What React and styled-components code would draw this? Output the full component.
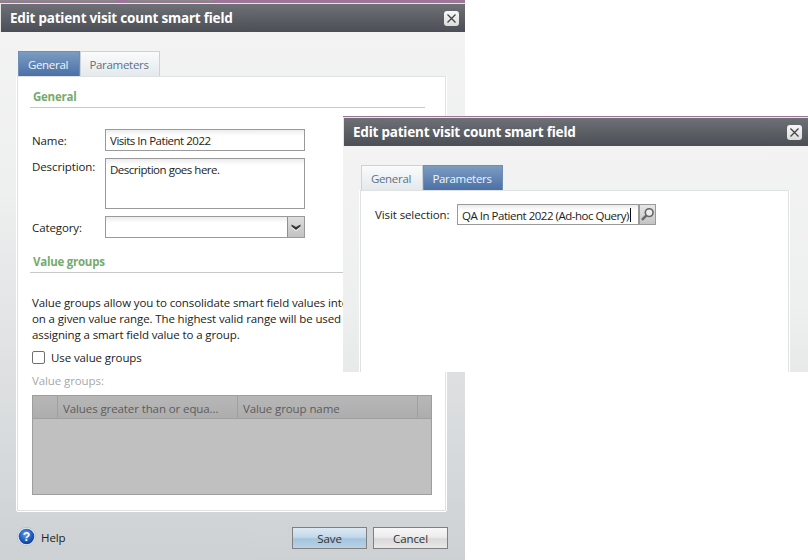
import React from "react";
import styled, { createGlobalStyle } from "styled-components";

const GlobalStyle = createGlobalStyle`
  html, body {
    margin: 0;
    padding: 0;
    background: #fff;
  }
  body {
    font-family: "Open Sans", "Noto Sans", sans-serif;
    font-size: 11.5px;
    letter-spacing: -0.1px;
    color: #222;
  }
`;

const Canvas = styled.div`
  position: relative;
  width: 808px;
  height: 560px;
  overflow: hidden;
  background: #fff;
`;

const Window = styled.div`
  position: absolute;
  left: ${(p) => p.$left}px;
  top: ${(p) => p.$top}px;
  width: 465px;
  height: ${(p) => p.$height}px;
  overflow: hidden;
  display: flex;
  flex-direction: column;
`;

const Stripe = styled.div`
  height: ${(p) => p.$size}px;
  flex: none;
  background: ${(p) =>
    p.$shadowed
      ? "linear-gradient(90deg, #8d8a8c 0 115px, transparent 115px 128px, #8d8a8c 128px 213px, transparent 213px) top / 100% 1px no-repeat, #9c7599"
      : "#9c7599"};
  border-bottom: 1px solid #e9e3e8;
`;

const TitleBar = styled.div`
  height: 28px;
  flex: none;
  display: flex;
  align-items: center;
  justify-content: space-between;
  padding: 0 6px 0 10px;
  background: linear-gradient(#6d7075, #4b4e54);
  box-shadow: inset 1px 0 0 #e6e6e6;
  color: #fff;
  font-family: "Noto Sans", sans-serif;
  font-size: 13.5px;
  font-weight: 700;
  letter-spacing: -0.2px;
`;

const CloseButton = styled.div`
  width: 15px;
  height: 15px;
  display: flex;
  align-items: center;
  justify-content: center;
  background: linear-gradient(#f8f8f8, #dcdcdc);
  border-radius: 3px;
`;

const Body = styled.div`
  height: 528px;
  flex: none;
  box-sizing: border-box;
  padding: 19px 19px 0 17px;
  display: flex;
  flex-direction: column;
  background: linear-gradient(#f3f3f3 0%, #eeefef 30%, #cdd1d3 100%);
`;

const TabRow = styled.div`
  display: flex;
  height: 25px;
  flex: none;
  padding-left: 1px;
`;

const Tab = styled.div`
  width: ${(p) => p.$width}px;
  box-sizing: border-box;
  padding-right: 2px;
  display: flex;
  align-items: center;
  justify-content: center;
  letter-spacing: -0.3px;
  color: ${(p) => (p.$active ? "#f2f5f9" : "#5e7187")};
  background: ${(p) =>
    p.$active
      ? "linear-gradient(#7c9cc0, #4a70a6)"
      : "linear-gradient(#fafbfb, #e4e9ec)"};
  border: 1px solid ${(p) => (p.$active ? "#6e8fb5" : "#cfd2d4")};
  border-bottom: none;
`;

const Panel = styled.div`
  height: 435px;
  flex: none;
  box-sizing: border-box;
  background: #fff;
  border: 1px solid #dfe1e2;
  box-shadow: 0 1px 0 #fff, 1px 0 0 #fff, -1px 0 0 #fff;
  padding: 0 13px 0 12px;
  display: flex;
  flex-direction: column;
`;

const SectionTitle = styled.div`
  height: 31px;
  box-sizing: border-box;
  padding: 12px 0 0 3px;
  margin-right: 7px;
  line-height: 16px;
  color: #76ab6d;
  font-weight: 700;
  letter-spacing: -0.25px;
  border-bottom: 1px solid #c8c8c8;
`;

const FormRows = styled.div`
  margin-top: 21px;
  padding-left: 2px;
  display: flex;
  flex-direction: column;
  gap: 7px;
`;

const Row = styled.div`
  display: flex;
  align-items: flex-start;
`;

const Label = styled.div`
  width: 73px;
  height: 21px;
  flex: none;
  line-height: ${(p) => p.$lineHeight}px;
`;

const TextBox = styled.div`
  width: ${(p) => p.$width}px;
  height: ${(p) => p.$height}px;
  flex: none;
  box-sizing: border-box;
  border: 1px solid #9a9a9a;
  padding: 0 4px;
  line-height: 21px;
  letter-spacing: -0.48px;
  white-space: nowrap;
  overflow: hidden;
  background: linear-gradient(#ececec 0, #fff 6px);
  display: flex;
  justify-content: space-between;
`;

const Caret = styled.span`
  display: inline-block;
  width: 1px;
  height: 14px;
  margin: 3px 0 0 1px;
  vertical-align: top;
  background: #111;
`;

const ArrowBox = styled.div`
  width: 16px;
  height: 20px;
  margin-right: -4px;
  display: flex;
  align-items: center;
  justify-content: center;
  background: linear-gradient(#dedede, #c2c2c2);
  border-left: 1px solid #8f8f8f;
`;

const LookupRow = styled.div`
  display: flex;
  margin: 13px 0 0 2px;
`;

const LookupLabel = styled.div`
  width: 82px;
  line-height: 21px;
`;

const LookupButton = styled.div`
  width: 17px;
  height: 21px;
  box-sizing: border-box;
  display: flex;
  align-items: center;
  justify-content: center;
  background: linear-gradient(#e6e6e6, #c4c4c4);
  border: 1px solid #9a9a9a;
`;

const GroupHeading = styled(SectionTitle)`
  margin-top: 6px;
  height: 29px;
  padding-top: 10px;
`;

const Intro = styled.p`
  margin: 22px 0 0 2px;
  height: 48px;
  line-height: 16px;
  white-space: nowrap;
  letter-spacing: -0.12px;
`;

const CheckRow = styled.label`
  margin: 6px 0 0 2px;
  display: flex;
  align-items: center;
  gap: 6px;
  height: 16px;
`;

const CheckBox = styled.span`
  width: 11px;
  height: 11px;
  border: 1px solid #707070;
  border-radius: 2px;
  background: #fff;
`;

const MutedLabel = styled.div`
  margin: 7px 0 0 2px;
  height: 23px;
  line-height: 18px;
  color: #a8a8a8;
`;

const Grid = styled.div`
  margin-left: 2px;
  width: 400px;
  height: 100px;
  box-sizing: border-box;
  border: 1px solid #9d9d9d;
  background: #c0c0c0;
`;

const GridHead = styled.div`
  height: 22px;
  display: flex;
  background: linear-gradient(#b7b7b7, #adadad);
  border-bottom: 1px solid #a0a0a0;
  color: #5c5c5c;
  line-height: 25px;
`;

const GridCell = styled.div`
  width: ${(p) => p.$width}px;
  flex: none;
  box-sizing: border-box;
  padding-left: 5px;
  border-right: 1px solid #a0a0a0;
  white-space: nowrap;
  overflow: hidden;
`;

const Footer = styled.div`
  margin-top: 16px;
  display: flex;
  align-items: flex-start;
  margin-right: -2px;
`;

const Help = styled.div`
  display: flex;
  align-items: flex-start;
  gap: 5px;
  line-height: 22px;
  flex: 1;
`;

const Buttons = styled.div`
  display: flex;
  gap: 6px;
`;

const Button = styled.div`
  width: 75px;
  height: 22px;
  box-sizing: border-box;
  display: flex;
  align-items: center;
  justify-content: center;
  border: 1px solid #808080;
  color: #333;
  background: ${(p) =>
    p.$primary
      ? "linear-gradient(#dce9f3 0%, #c3d9ea 45%, #a4c4de 55%, #b9d2e6 100%)"
      : "linear-gradient(#f7f7f7 0%, #ececec 45%, #d9d9d9 55%, #e8e8e8 100%)"};
`;

const CloseIcon = () => (
  <svg width="11" height="11" viewBox="0 0 11 11">
    <path d="M1.5 1.5l8 8M9.5 1.5l-8 8" stroke="#444" strokeWidth="1.3" fill="none" />
  </svg>
);

const SearchIcon = () => (
  <svg width="15" height="15" viewBox="0 0 15 15">
    <circle cx="9.2" cy="5.6" r="3.9" stroke="#666" strokeWidth="1.6" fill="#ececec" />
    <path d="M6.2 8.6L2 12.8" stroke="#666" strokeWidth="2.4" />
  </svg>
);

const ArrowIcon = () => (
  <svg width="10" height="7" viewBox="0 0 10 7">
    <path d="M0.5 1.5L5 4l4.5-2.5V3.5L5 7 0.5 3.5z" fill="#fff" />
    <path d="M0.5 0.5L5 3l4.5-2.5V2.5L5 6 0.5 2.5z" fill="#333" />
  </svg>
);

const HelpIcon = () => (
  <svg width="19" height="19" viewBox="0 0 20 20">
    <defs>
      <radialGradient id="helpBall" cx="45%" cy="35%" r="65%">
        <stop offset="0" stopColor="#6f9fe6" />
        <stop offset="0.6" stopColor="#1f5fc4" />
        <stop offset="1" stopColor="#123f8f" />
      </radialGradient>
    </defs>
    <circle cx="10" cy="10" r="9.6" fill="#e8ecf0" stroke="#aab2ba" strokeWidth="0.6" />
    <circle cx="10" cy="10" r="8.2" fill="url(#helpBall)" />
    <text x="10" y="14.5" textAnchor="middle" fontSize="13" fontWeight="700" fontFamily="Liberation Sans, sans-serif" fill="#fff">?</text>
  </svg>
);

function Dialog({ left, top, height, stripe, shadowed, active, children }) {
  return (
    <Window $left={left} $top={top} $height={height}>
      <Stripe $size={stripe} $shadowed={shadowed} />
      <TitleBar>
        <span>Edit patient visit count smart field</span>
        <CloseButton>
          <CloseIcon />
        </CloseButton>
      </TitleBar>
      <Body>
        <TabRow>
          <Tab $width={62} $active={active === "general"}>General</Tab>
          <Tab $width={80} $active={active === "parameters"}>Parameters</Tab>
        </TabRow>
        {children}
      </Body>
    </Window>
  );
}

export default function App() {
  return (
    <Canvas>
      <GlobalStyle />
      <Dialog left={0} top={0} height={560} stripe={3} shadowed active="general">
        <Panel>
          <SectionTitle>General</SectionTitle>
          <FormRows>
            <Row>
              <Label $lineHeight={23}>Name:</Label>
              <TextBox $width={200} $height={22}>Visits In Patient 2022</TextBox>
            </Row>
            <Row>
              <Label $lineHeight={18}>Description:</Label>
              <TextBox $width={200} $height={51}>Description goes here.</TextBox>
            </Row>
            <Row>
              <Label $lineHeight={23}>Category:</Label>
              <TextBox $width={200} $height={22}>
                <span />
                <ArrowBox>
                  <ArrowIcon />
                </ArrowBox>
              </TextBox>
            </Row>
          </FormRows>
          <GroupHeading>Value groups</GroupHeading>
          <Intro>
            Value groups allow you to consolidate smart field values into groups based
            <br />
            on a given value range. The highest valid range will be used when
            <br />
            assigning a smart field value to a group.
          </Intro>
          <CheckRow>
            <CheckBox />
            Use value groups
          </CheckRow>
          <MutedLabel>Value groups:</MutedLabel>
          <Grid>
            <GridHead>
              <GridCell $width={25} />
              <GridCell $width={180}>Values greater than or equa...</GridCell>
              <GridCell $width={180}>Value group name</GridCell>
            </GridHead>
          </Grid>
        </Panel>
        <Footer>
          <Help>
            <HelpIcon />
            Help
          </Help>
          <Buttons>
            <Button $primary>Save</Button>
            <Button>Cancel</Button>
          </Buttons>
        </Footer>
      </Dialog>
      <Dialog left={343} top={116} height={256} stripe={1} active="parameters">
        <Panel>
          <LookupRow>
            <LookupLabel>Visit selection:</LookupLabel>
            <TextBox $width={182} $height={21}>
              <span>QA In Patient 2022 (Ad-hoc Query)<Caret /></span>
            </TextBox>
            <LookupButton>
              <SearchIcon />
            </LookupButton>
          </LookupRow>
        </Panel>
      </Dialog>
    </Canvas>
  );
}
